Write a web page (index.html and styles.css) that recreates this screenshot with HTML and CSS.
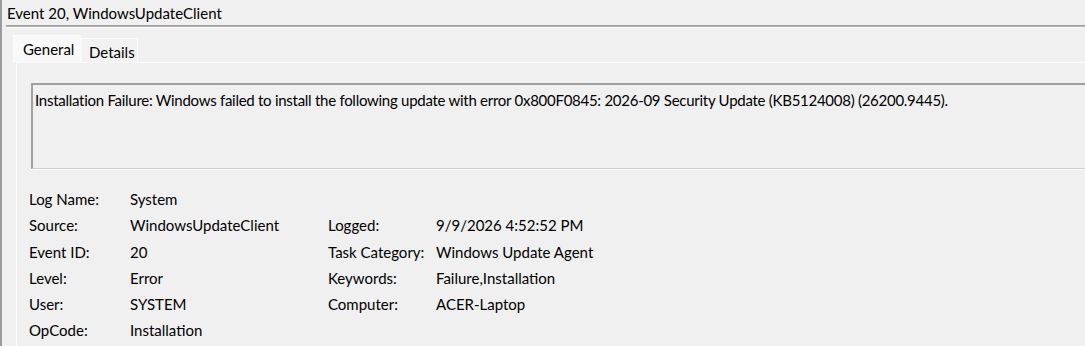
FILE: index.html
```html
<!DOCTYPE html>
<html>
<head>
<meta charset="utf-8">
<link rel="stylesheet" href="styles.css">
</head>
<body>
<div class="window">
  <div class="title">Event 20, WindowsUpdateClient</div>
  <div class="separator"></div>
  <div class="tabs">
    <div class="tab active">General</div>
    <div class="tab">Details</div>
  </div>
  <div class="panel">
    <div class="message">Installation Failure: Windows failed to install the following update with error 0x800F0845: 2026-09 Security Update (KB5124008) (26200.9445).</div>
    <div class="fields">
      <div class="label">Log Name:</div><div class="value">System</div><div></div><div></div>
      <div class="label">Source:</div><div class="value">WindowsUpdateClient</div><div class="label">Logged:</div><div class="value">9/9/2026 4:52:52 PM</div>
      <div class="label">Event ID:</div><div class="value">20</div><div class="label">Task Category:</div><div class="value">Windows Update Agent</div>
      <div class="label">Level:</div><div class="value">Error</div><div class="label">Keywords:</div><div class="value">Failure,Installation</div>
      <div class="label">User:</div><div class="value">SYSTEM</div><div class="label">Computer:</div><div class="value">ACER-Laptop</div>
      <div class="label">OpCode:</div><div class="value">Installation</div><div></div><div></div>
    </div>
  </div>
</div>
</body>
</html>
```

FILE: styles.css
```css
html, body {
  margin: 0;
  padding: 0;
  background: #f0f0f0;
  overflow: hidden;
}

body {
  font-family: "Lato", "Noto Sans", sans-serif;
  font-size: 15px;
  color: #000;
}

.window {
  height: 346px;
  border-left: 2px solid #9c9c9c;
  overflow: hidden;
}

.title {
  height: 25px;
  line-height: 26px;
  padding-left: 5px;
  white-space: nowrap;
}

.separator {
  margin-left: 4px;
  height: 1px;
  border-top: 1px solid #a0a0a0;
  background: #b4b4b4;
  border-bottom: 1px solid #f8f8f8;
}

.tabs {
  display: flex;
  align-items: flex-end;
  margin-top: 7px;
  padding-left: 11px;
  height: 27px;
}

.tab {
  box-sizing: border-box;
  height: 24px;
  line-height: 24px;
  padding: 0 7px;
  background: #f2f2f2;
  border: 1px solid #fafafa;
  border-bottom: none;
  white-space: nowrap;
}

.tab.active {
  height: 27px;
  line-height: 27px;
  width: 68px;
  padding: 0 9px;
  background: #f9f9f9;
  border-color: #fbfbfb;
}

.tab:not(.active) {
  width: 57px;
  line-height: 26px;
}

.panel {
  margin-left: 14px;
  border-top: 1px solid #fbfbfb;
  border-left: 1px solid #fbfbfb;
  height: 300px;
}

.message {
  margin: 20px -40px 0 14px;
  height: 78px;
  box-sizing: content-box;
  padding: 5px 2px 0 2px;
  line-height: 20px;
  letter-spacing: -0.27px;
  border-top: 2px solid #a0a0a0;
  border-left: 2px solid #a0a0a0;
  border-bottom: 1px solid #cfcfcf;
  box-shadow: 0 1px 0 #ffffff;
  white-space: nowrap;
}

.fields {
  display: grid;
  grid-template-columns: 101px 198px 108px auto;
  grid-auto-rows: 26.3px;
  margin-top: 17px;
  padding-left: 12px;
  line-height: 26px;
  white-space: nowrap;
}
```
